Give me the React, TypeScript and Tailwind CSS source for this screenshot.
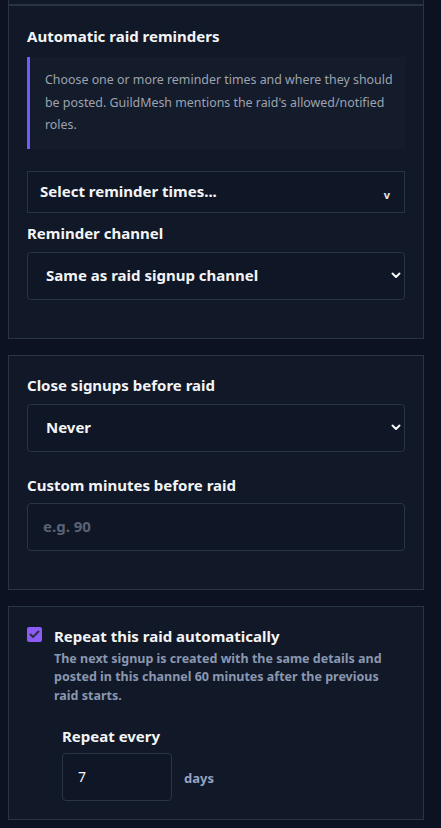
import React from "react";

const font = { fontFamily: "'Noto Sans', 'Open Sans', sans-serif" };

function Chevron() {
  return (
    <svg width="10" height="7" viewBox="0 0 10 7" fill="none" aria-hidden="true">
      <path d="M1.5 1.5L5 5L8.5 1.5" stroke="#f3f4f6" strokeWidth="2" strokeLinecap="round" strokeLinejoin="round" />
    </svg>
  );
}

function SelectBox({ value }: { value: string }) {
  return (
    <div className="flex h-[48px] items-center justify-between rounded-[4px] border border-[#2a3447] bg-[#0f1625] pl-[18px] pr-[3px]">
      <span className="text-[15px] font-bold text-[#f3f4f6]">{value}</span>
      <span className="-mt-[1px]">
        <Chevron />
      </span>
    </div>
  );
}

function Label({ children }: { children: React.ReactNode }) {
  return <p className="text-[15px] font-bold leading-[20px] text-[#f3f4f6]">{children}</p>;
}

export default function App() {
  return (
    <div className="min-h-screen w-[441px] bg-[#0c1221] pl-2" style={font}>
      <div className="w-[416px]">
        {/* tail of the previous panel */}
        <div className="h-[5px] border-x border-b border-[#2a3447] bg-[#111827]" />

        {/* Reminders */}
        <section className="border border-[#2a3447] bg-[#111827] px-[18px] pb-[38px] pt-[20px]">
          <h3 className="text-[15px] font-bold leading-[20px] text-[#f3f4f6]">Automatic raid reminders</h3>
          <div className="mt-[11px] border-l-[3px] border-[#6d5dfc] bg-[#141b2b] py-3 pl-[15px] pr-[10px]">
            <p className="text-[12.4px] leading-[22.5px] text-[#9ca3af]">
              Choose one or more reminder times and where they should be posted. GuildMesh mentions the raid's
              allowed/notified roles.
            </p>
          </div>
          <div className="mt-[22px] flex h-[42px] items-center justify-between border border-[#2a3447] bg-[#0f1625] pl-3 pr-[14px]">
            <span className="text-[15px] font-bold text-[#f3f4f6]">Select reminder times...</span>
            <span className="mt-[8px] text-[11px] font-bold text-[#e5e7eb]">v</span>
          </div>
          <div className="mt-[10px]">
            <Label>Reminder channel</Label>
          </div>
          <div className="mt-[9px]">
            <SelectBox value="Same as raid signup channel" />
          </div>
        </section>

        {/* Close signups */}
        <section className="mt-4 border border-[#2a3447] bg-[#111827] px-[18px] pb-[38px] pt-[19px]">
          <Label>Close signups before raid</Label>
          <div className="mt-[9px]">
            <SelectBox value="Never" />
          </div>
          <div className="mt-[23px]">
            <Label>Custom minutes before raid</Label>
          </div>
          <div className="mt-[8px] flex h-[48px] items-center rounded-[4px] border border-[#2a3447] bg-[#0f1625] pl-[15px]">
            <span className="text-[15px] font-bold text-[#5b6271]">e.g. 90</span>
          </div>
        </section>

        {/* Repeat */}
        <section className="mt-4 border border-[#2a3447] bg-[#111827] px-[18px] pb-[18px] pt-[19px]">
          <div className="flex items-start gap-3">
            <span className="mt-[1px] flex h-[15px] w-[15px] shrink-0 items-center justify-center rounded-[2px] bg-[#8b5cf6]">
              <svg width="11" height="9" viewBox="0 0 11 9" fill="none" aria-hidden="true">
                <path d="M1.5 4.5L4 7L9.5 1.5" stroke="#2d2f45" strokeWidth="2" strokeLinecap="round" strokeLinejoin="round" />
              </svg>
            </span>
            <div>
              <p className="text-[15px] font-bold leading-[20px] text-[#f3f4f6]">Repeat this raid automatically</p>
              <p className="mt-[4px] text-[12.5px] font-bold leading-[18.7px] text-[#8a97b0]">
                The next signup is created with the same details and posted in this channel 60 minutes after the
                previous raid starts.
              </p>
              <div className="ml-2 mt-[20px]">
                <Label>Repeat every</Label>
                <div className="mt-[7px] flex items-center gap-3">
                  <div className="flex h-[48px] w-[110px] items-center rounded-[4px] border border-[#2a3447] bg-[#0f1625] pl-[15px]">
                    <span className="text-[14px] text-[#f3f4f6]">7</span>
                  </div>
                  <span className="mt-[4px] text-[13px] font-bold text-[#93a3c4]">days</span>
                </div>
              </div>
            </div>
          </div>
        </section>
      </div>
    </div>
  );
}
